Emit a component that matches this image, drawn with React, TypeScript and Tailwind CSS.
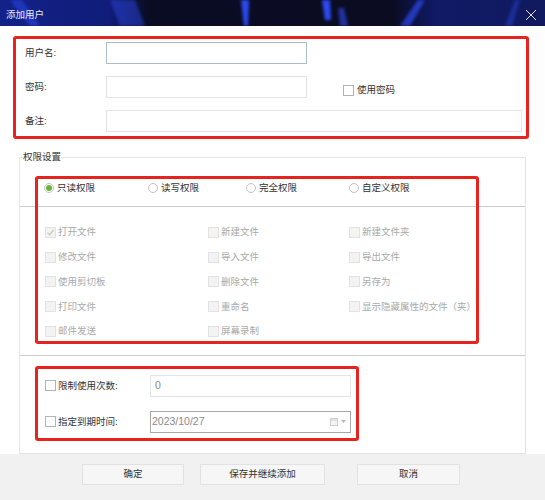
import React from 'react';

const font = "font-['Liberation_Sans','Noto_Sans_CJK_SC',sans-serif]";

function TitleArt() {
  return (
    <svg className="absolute inset-0" width="545" height="26" viewBox="0 0 545 26" aria-hidden="true">
      <defs>
        <linearGradient id="tb" x1="0" y1="0" x2="1" y2="0">
          <stop offset="0" stopColor="#13228a" />
          <stop offset="0.2" stopColor="#101c78" />
          <stop offset="0.27" stopColor="#0a0c24" />
          <stop offset="0.72" stopColor="#0b0c22" />
          <stop offset="0.8" stopColor="#101a66" />
          <stop offset="1" stopColor="#111a5e" />
        </linearGradient>
        <filter id="bl" x="-50%" y="-50%" width="200%" height="200%">
          <feGaussianBlur stdDeviation="1.6" />
        </filter>
      </defs>
      <rect width="545" height="26" fill="url(#tb)" />
      <g filter="url(#bl)" fill="#2b49f0">
        <polygon points="10,0 22,0 40,26 30,26" opacity="0.5" />
        <polygon points="110,0 135,0 145,26 120,26" opacity="0.45" />
        <polygon points="241,0 249,0 248,26 244,26" />
        <polygon points="322,0 330,0 331,20 325,20" />
        <polygon points="338,8 344,8 348,26 340,26" opacity="0.6" />
        <polygon points="400,26 410,26 425,0 418,0" opacity="0.7" />
        <polygon points="505,26 512,26 520,0 515,0" opacity="0.4" />
      </g>
    </svg>
  );
}

function Box({ disabled = false, checked = false }: { disabled?: boolean; checked?: boolean }) {
  return (
    <span
      className={
        disabled
          ? 'relative inline-block w-[11px] h-[11px] shrink-0 border border-[#e2e2e2] bg-[#f3f3f3]'
          : 'relative inline-block w-[11px] h-[11px] shrink-0 border border-[#b4b4b4] bg-white'
      }
    >
      {checked && (
        <svg className="absolute inset-0" width="9" height="9" viewBox="0 0 9 9" aria-hidden="true">
          <path d="M1.5 4.6 L3.6 6.8 L7.6 1.8" fill="none" stroke="#c4c4c4" strokeWidth="1.2" />
        </svg>
      )}
    </span>
  );
}

function Radio({ label, selected = false }: { label: string; selected?: boolean }) {
  return (
    <div className="flex items-center h-[12px]">
      <span className="flex items-center justify-center w-[10px] h-[10px] rounded-full border border-[#c2c2c2] bg-white">
        {selected && <span className="w-[6px] h-[6px] rounded-full bg-[#6ab43a]" />}
      </span>
      <span className="ml-[3px] text-[9.5px] leading-[12px] text-[#333]">{label}</span>
    </div>
  );
}

const perms: [string, boolean][] = [
  ['打开文件', true],
  ['新建文件', false],
  ['新建文件夹', false],
  ['修改文件', false],
  ['导入文件', false],
  ['导出文件', false],
  ['使用剪切板', false],
  ['删除文件', false],
  ['另存为', false],
  ['打印文件', false],
  ['重命名', false],
  ['显示隐藏属性的文件（夹）', false],
  ['邮件发送', false],
  ['屏幕录制', false],
];

export default function App() {
  return (
    <div className={`relative w-[545px] h-[500px] bg-white flex flex-col overflow-hidden ${font}`}>
      {/* title bar */}
      <div className="relative h-[26px] shrink-0 flex items-center justify-between pt-[4px]">
        <TitleArt />
        <span className="relative pl-[6px] text-[9.5px] leading-[12px] text-[#e8ecff]">添加用户</span>
        <svg className="relative mr-[8px]" width="12" height="12" viewBox="0 0 12 12" aria-hidden="true">
          <path d="M1 1 L11 11 M11 1 L1 11" stroke="#dfe3f5" strokeWidth="1" />
        </svg>
      </div>

      {/* account fields */}
      <div className="flex flex-col gap-[12px] pt-[16px]">
        <div className="flex items-center h-[22px]">
          <span className="w-[106px] pl-[25px] text-[9.5px] text-[#333]">用户名:</span>
          <div className="w-[201px] h-[22px] border border-[#a9bfcf] bg-white" />
        </div>
        <div className="flex items-center h-[22px]">
          <span className="w-[106px] pl-[25px] text-[9.5px] text-[#333]">密码:</span>
          <div className="w-[201px] h-[22px] border border-[#e4e4e4] bg-white" />
          <div className="ml-[36px] mt-[6px] flex items-center">
            <Box />
            <span className="ml-[3px] text-[9.5px] leading-[12px] text-[#333]">使用密码</span>
          </div>
        </div>
        <div className="flex items-center h-[22px]">
          <span className="w-[106px] pl-[25px] text-[9.5px] text-[#333]">备注:</span>
          <div className="w-[416px] h-[22px] border border-[#e4e4e4] bg-white" />
        </div>
      </div>

      {/* permissions group */}
      <fieldset className="mt-[19px] ml-[19px] w-[507px] border border-[#e4e4e4] px-0 pb-0 pt-0 m-0">
        <legend className="ml-[3px] px-0 text-[9.5px] leading-[12px] text-[#333]">权限设置</legend>

        <div className="pt-[19px] pb-[12px] border-b border-[#cdcdcd] pl-[24px] grid grid-cols-[104px_98px_103px_auto]">
          <Radio label="只读权限" selected />
          <Radio label="读写权限" />
          <Radio label="完全权限" />
          <Radio label="自定义权限" />
        </div>

        <div className="pt-[13px] pb-[11px] border-b border-[#cdcdcd] pl-[25px] grid grid-cols-[163px_141px_auto]">
          {perms.map(([name, checked]) => (
            <div key={name} className="flex items-center h-[24.75px]">
              <Box disabled checked={checked} />
              <span className="ml-[2px] text-[9.5px] leading-[12px] text-[#a9a9a9] whitespace-nowrap">{name}</span>
            </div>
          ))}
        </div>

        <div className="pt-[19px] pb-[20px] pl-[25px] flex flex-col gap-[14px]">
          <div className="flex items-center h-[22px]">
            <div className="w-[105px] flex items-center">
              <Box />
              <span className="ml-[2px] text-[9.5px] leading-[12px] text-[#333]">限制使用次数:</span>
            </div>
            <div className="w-[201px] h-[22px] border border-[#e4e4e4] bg-white flex items-center pl-[4px] text-[10.5px] text-[#888]">
              0
            </div>
          </div>
          <div className="flex items-center h-[22px]">
            <div className="w-[105px] flex items-center">
              <Box />
              <span className="ml-[2px] text-[9.5px] leading-[12px] text-[#333]">指定到期时间:</span>
            </div>
            <div className="w-[201px] h-[22px] border border-[#a8a8a8] bg-white flex items-center justify-between pl-[1px] pr-[4px] text-[10.5px] text-[#8a8a8a]">
              <span>2023/10/27</span>
              <span className="flex items-center gap-[3px]">
                <svg width="8" height="9" viewBox="0 0 8 9" aria-hidden="true">
                  <rect x="0.5" y="1.5" width="7" height="7" fill="#f4f4f4" stroke="#cfcfcf" />
                  <path d="M0.5 3 H7.5" stroke="#cfcfcf" />
                </svg>
                <svg width="5" height="3" viewBox="0 0 5 3" aria-hidden="true">
                  <path d="M0 0 H5 L2.5 3 Z" fill="#b8b8b8" />
                </svg>
              </span>
            </div>
          </div>
        </div>
      </fieldset>

      {/* footer buttons */}
      <div className="flex-1 bg-[#f1f1f1] pt-[10px] pl-[82px] flex items-start">
        <button className="w-[102px] h-[21px] bg-[#f6f6f6] border border-[#e2e2e2] text-[9.5px] text-[#333]">确定</button>
        <button className="ml-[16px] w-[125px] h-[21px] bg-[#f6f6f6] border border-[#e2e2e2] text-[9.5px] text-[#333]">
          保存并继续添加
        </button>
        <button className="ml-[32px] w-[103px] h-[21px] bg-[#f6f6f6] border border-[#e2e2e2] text-[9.5px] text-[#333]">取消</button>
      </div>

      {/* red annotation frames */}
      <div className="absolute left-[13px] top-[36px] w-[516px] h-[103px] border-[3px] border-[#e6231c] rounded-[3px] pointer-events-none" />
      <div className="absolute left-[35px] top-[176px] w-[444px] h-[168px] border-[3px] border-[#e6231c] rounded-[3px] pointer-events-none" />
      <div className="absolute left-[35px] top-[366px] w-[324px] h-[75px] border-[3px] border-[#e6231c] rounded-[3px] pointer-events-none" />
    </div>
  );
}
